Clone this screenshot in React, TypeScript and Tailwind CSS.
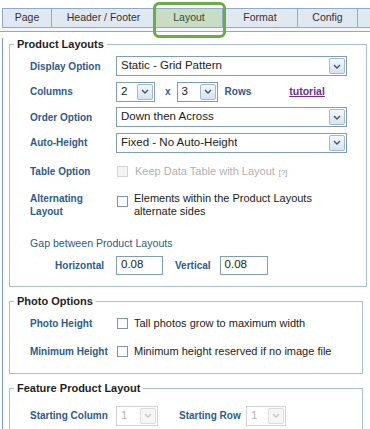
import type { ReactNode } from 'react'

const lbl = 'text-[10px] font-bold text-[#2d5b8c] leading-[13px]'

function Chevron({ disabled }: { disabled?: boolean }) {
  return (
    <svg width="8" height="5" viewBox="0 0 8 5" fill="none">
      <path d="M1 1l3 3 3-3" stroke={disabled ? '#c8c8c8' : '#3f5575'} strokeWidth="1.4" />
    </svg>
  )
}

function Select({ value, className, disabled }: { value: string; className: string; disabled?: boolean }) {
  return (
    <div
      className={
        'flex items-center h-[20px] border bg-white pl-[4px] pr-[1px] text-[11.5px] ' +
        (disabled ? 'border-[#d2d2d2] text-[#b4b4b4] ' : 'border-[#7f9db9] text-[#222] ') +
        className
      }
    >
      <span className="truncate">{value}</span>
      <span
        className={
          'ml-auto w-[16px] h-[16px] flex items-center justify-center border rounded-[2px] ' +
          (disabled
            ? 'border-[#dcdcdc] bg-[#f6f6f6]'
            : 'border-[#a3b9d2] bg-linear-to-b from-[#f4f8fc] to-[#d6e3f1]')
        }
      >
        <Chevron disabled={disabled} />
      </span>
    </div>
  )
}

function Checkbox({ disabled }: { disabled?: boolean }) {
  return (
    <span
      className={
        'block w-[11px] h-[11px] border ' +
        (disabled ? 'border-[#d4d4d4] bg-[#f4f4f4]' : 'border-[#8093ab] bg-linear-to-b from-[#f6f8fb] to-white')
      }
    />
  )
}

function Field({ title, className, children }: { title: string; className?: string; children: ReactNode }) {
  return (
    <fieldset className={'border border-[#a9bed7] ' + (className ?? '')}>
      <legend className="ml-[4px] px-[3px] text-[11px] font-bold leading-[13px] text-[#1e1e1e]">{title}</legend>
      {children}
    </fieldset>
  )
}

const tabs = ['Page', 'Header / Footer', 'Layout', 'Format', 'Config', '']
const tabW = ['w-[49px]', 'w-[104px]', 'w-[67px]', 'w-[75px]', 'w-[60px]', 'w-[20px]']

export default function App() {
  return (
    <div className="w-[370px] h-[429px] overflow-hidden bg-white relative font-['Liberation_Sans',Arial,sans-serif]">
      {/* tabs */}
      <div className="pt-[8px] pl-[2px] flex">
        {tabs.map((t, i) => (
          <div
            key={i}
            className={
              'h-[20px] shrink-0 flex items-center justify-center border-t border-b border-l border-[#90aacb] text-[10.5px] ' +
              tabW[i] +
              (t === 'Layout' ? ' bg-[#c8ddc3] text-[#3b4a3a]' : ' bg-[#e0e8f2] text-[#333]')
            }
          >
            {t}
          </div>
        ))}
      </div>
      <div className="h-[4px] bg-[#f2f5fa] border-b border-[#90aacb]" />
      <div className="absolute left-[153px] top-[2px] w-[73px] h-[36px] border-[3px] border-[#6cab47] rounded-[6px]" />

      {/* panel */}
      <div className="ml-[2px] border-l border-[#7d9cc2] pl-[6px] h-[400px]">
        <Field title="Product Layouts" className="mt-[6px] w-[358px] pb-[11px]">
          <div className="pl-[20px] pt-[5px] flex flex-col">
            <div className="flex items-center h-[20px]">
              <span className={lbl + ' w-[86px]'}>Display Option</span>
              <Select value="Static - Grid Pattern" className="w-[231px]" />
            </div>
            <div className="flex items-center h-[20px] mt-[5.5px]">
              <span className={lbl + ' w-[86px]'}>Columns</span>
              <Select value="2" className="w-[39px]" />
              <span className={lbl + ' ml-[10px]'}>x</span>
              <Select value="3" className="w-[41px] ml-[6px]" />
              <span className={lbl + ' ml-[7px]'}>Rows</span>
              <span className="ml-[38px] text-[10.5px] font-bold text-[#6a2c9c] underline">tutorial</span>
            </div>
            <div className="flex items-center h-[20px] mt-[5.5px]">
              <span className={lbl + ' w-[86px]'}>Order Option</span>
              <Select value="Down then Across" className="w-[231px]" />
            </div>
            <div className="flex items-center h-[20px] mt-[5.5px]">
              <span className={lbl + ' w-[86px]'}>Auto-Height</span>
              <Select value="Fixed - No Auto-Height" className="w-[231px]" />
            </div>
            <div className="flex items-center h-[20px] mt-[9px]">
              <span className={lbl + ' w-[86px]'}>Table Option</span>
              <span className="ml-[1px]">
                <Checkbox disabled />
              </span>
              <span className="ml-[7px] text-[11px] text-[#b0b0b0]">Keep Data Table with Layout</span>
              <span className="ml-[4px] text-[7.5px] text-[#999] mt-[2px]">[?]</span>
            </div>
            <div className="flex items-start mt-[10.5px]">
              <span className={lbl + ' w-[86px]'}>
                Alternating
                <br />
                Layout
              </span>
              <span className="ml-[1px] mt-[4px]">
                <Checkbox />
              </span>
              <span className="ml-[6px] text-[11px] leading-[13px] text-[#222]">
                Elements within the Product Layouts
                <br />
                alternate sides
              </span>
            </div>
            <div className="mt-[17.5px] text-[10.6px] text-[#2d5b8c] leading-[14px]">Gap between Product Layouts</div>
            <div className="flex items-center h-[19px] mt-[6px]">
              <span className={lbl + ' w-[86px] text-right pr-[12px]'}>Horizontal</span>
              <div className="w-[47px] h-[19px] border border-[#7f9db9] pl-[4px] text-[11.5px] flex items-center text-[#222]">
                0.08
              </div>
              <span className={lbl + ' ml-[12px]'}>Vertical</span>
              <div className="ml-[9px] w-[48px] h-[19px] border border-[#7f9db9] pl-[4px] text-[11.5px] flex items-center text-[#222]">
                0.08
              </div>
            </div>
          </div>
        </Field>

        <Field title="Photo Options" className="mt-[8.5px] w-[354px] pb-[11px]">
          <div className="pl-[20px] pt-[5.5px] flex flex-col">
            <div className="flex items-center h-[20px]">
              <span className={lbl + ' w-[86px]'}>Photo Height</span>
              <span className="ml-[1px]">
                <Checkbox />
              </span>
              <span className="ml-[6px] text-[11px] text-[#222]">Tall photos grow to maximum width</span>
            </div>
            <div className="flex items-center h-[20px] mt-[8px]">
              <span className={lbl + ' w-[86px]'}>Minimum Height</span>
              <span className="ml-[1px]">
                <Checkbox />
              </span>
              <span className="ml-[6px] text-[11px] text-[#222]">Minimum height reserved if no image file</span>
            </div>
          </div>
        </Field>

        <Field title="Feature Product Layout" className="mt-[8.5px] w-[354px] pb-[11px]">
          <div className="pl-[20px] pt-[10.5px] flex flex-col">
            <div className="flex items-center h-[20px]">
              <span className={lbl + ' w-[86px]'}>Starting Column</span>
              <Select value="1" className="w-[42px]" disabled />
              <span className={lbl + ' ml-[21px] w-[67px]'}>Starting Row</span>
              <Select value="1" className="w-[40px]" disabled />
            </div>
          </div>
        </Field>
      </div>
    </div>
  )
}
